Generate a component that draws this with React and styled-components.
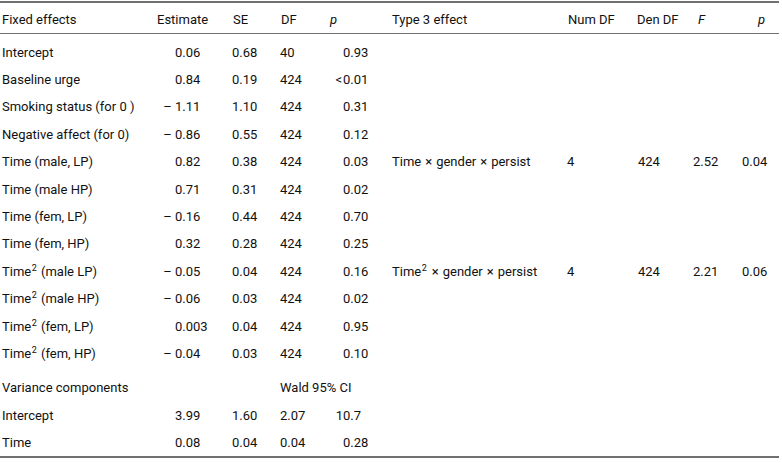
import React from 'react'
import styled, { createGlobalStyle } from 'styled-components'

const GlobalStyle = createGlobalStyle`
  body {
    margin: 0;
    background: #ffffff;
    font-family: Roboto, "Liberation Sans", sans-serif;
    color: #111111;
  }
`

const COLS = '157px 75px 48px 45px 67px 175px 70px 56px 49px 37px'

const Table = styled.div`
  width: 779px;
  margin-top: 1px;
  border-top: 2px solid #707070;
  border-bottom: 2px solid #707070;
  padding-bottom: 1px;
  font-size: 13px;
`

const Row = styled.div`
  display: grid;
  grid-template-columns: ${COLS};
  height: ${p => p.$h || 27.4}px;
  align-items: center;
  line-height: 1;
  white-space: nowrap;
`

const HeadRow = styled(Row)`
  height: 30px;
  border-bottom: 1.5px solid #707070;
  margin-bottom: 3.5px;
`

const Spacer = styled.div`
  height: 7px;
`

const Cell = styled.div`
  padding-top: 2px;
  padding-left: ${p => p.$pad || 0}px;
  grid-column: ${p => p.$span ? `span ${p.$span}` : 'auto'};
  font-style: ${p => p.$italic ? 'italic' : 'normal'};
`

const IntPart = styled.span`
  display: inline-block;
  width: 25.3px;
  text-align: right;
`

const Sup = styled.sup`
  font-size: 9px;
  line-height: 0;
  vertical-align: 5px;
  margin-left: 0.5px;
  margin-right: 1px;
`

const Times = styled.span`
  margin: 0 4px;
`

const Lt = styled.span`
  margin-right: 1px;
`

// decimal aligned number: "-0.05", "<0.01", "10.7"
function Dec({ v }) {
  let prefix = ''
  let s = v
  if (s.startsWith('-')) { prefix = '\u2013 '; s = s.slice(1) }
  let lt = false
  if (s.startsWith('<')) { lt = true; s = s.slice(1) }
  const [i, f] = s.split('.')
  return (
    <Cell>
      <IntPart>{lt && <Lt>&lt;</Lt>}{prefix}{i}</IntPart>.{f}
    </Cell>
  )
}

const Time2 = ({ rest }) => <>Time<Sup>2</Sup>{rest}</>

const effect = sq => (
  <>
    {sq ? <Time2 rest="" /> : 'Time'}<Times>×</Times>gender<Times>×</Times>persist
  </>
)

const fixed = [
  ['Intercept', '0.06', '0.68', '40', '0.93'],
  ['Baseline urge', '0.84', '0.19', '424', '<0.01'],
  ['Smoking status (for 0 )', '-1.11', '1.10', '424', '0.31'],
  ['Negative affect (for 0)', '-0.86', '0.55', '424', '0.12'],
  ['Time (male, LP)', '0.82', '0.38', '424', '0.03', [false, '4', '424', '2.52', '0.04']],
  ['Time (male HP)', '0.71', '0.31', '424', '0.02'],
  ['Time (fem, LP)', '-0.16', '0.44', '424', '0.70'],
  ['Time (fem, HP)', '0.32', '0.28', '424', '0.25'],
  [<Time2 rest=" (male LP)" />, '-0.05', '0.04', '424', '0.16', [true, '4', '424', '2.21', '0.06']],
  [<Time2 rest=" (male HP)" />, '-0.06', '0.03', '424', '0.02'],
  [<Time2 rest=" (fem, LP)" />, '0.003', '0.04', '424', '0.95'],
  [<Time2 rest=" (fem, HP)" />, '-0.04', '0.03', '424', '0.10'],
]

const variance = [
  ['Intercept', '3.99', '1.60', '2.07', '10.7'],
  ['Time', '0.08', '0.04', '0.04', '0.28'],
]

export default function App() {
  return (
    <>
      <GlobalStyle />
      <Table>
        <HeadRow>
          <Cell $pad={2}>Fixed effects</Cell>
          <Cell>Estimate</Cell>
          <Cell $pad={1}>SE</Cell>
          <Cell $pad={1}>DF</Cell>
          <Cell $pad={5} $italic>p</Cell>
          <Cell>Type 3 effect</Cell>
          <Cell $pad={1}>Num DF</Cell>
          <Cell>Den DF</Cell>
          <Cell $pad={5} $italic>F</Cell>
          <Cell $pad={16} $italic>p</Cell>
        </HeadRow>

        {fixed.map(([label, est, se, df, p, t3], idx) => (
          <Row key={idx}>
            <Cell $pad={2}>{label}</Cell>
            <Dec v={est} />
            <Cell>{se}</Cell>
            <Cell>{df}</Cell>
            <Dec v={p} />
            {t3 && (
              <>
                <Cell>{effect(t3[0])}</Cell>
                <Cell>{t3[1]}</Cell>
                <Cell $pad={1}>{t3[2]}</Cell>
                <Cell>{t3[3]}</Cell>
                <Cell>{t3[4]}</Cell>
              </>
            )}
          </Row>
        ))}

        <Spacer />
        <Row>
          <Cell $pad={2}>Variance components</Cell>
          <Cell />
          <Cell />
          <Cell $span={2}>Wald 95% CI</Cell>
        </Row>
        {variance.map(([label, est, se, lo, hi]) => (
          <Row key={label}>
            <Cell $pad={2}>{label}</Cell>
            <Dec v={est} />
            <Cell>{se}</Cell>
            <Cell>{lo}</Cell>
            <Dec v={hi} />
          </Row>
        ))}
      </Table>
    </>
  )
}
